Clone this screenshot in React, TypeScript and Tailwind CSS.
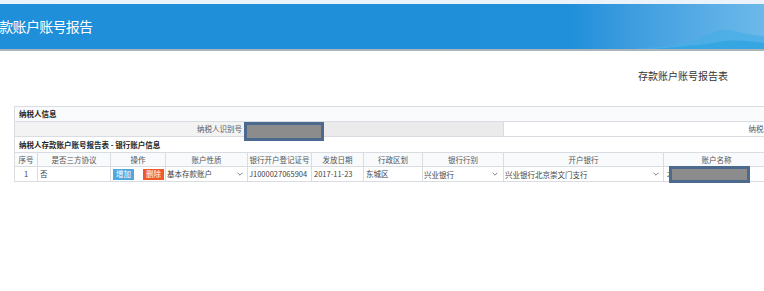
const font = { fontFamily: '"Noto Sans CJK SC", "Noto Sans", sans-serif' };

function Chevron() {
  return (
    <svg viewBox="0 0 10 6" className="w-[6px] h-[4px] shrink-0" fill="none" stroke="#666" strokeWidth="1.4">
      <path d="M1 1l4 4 4-4" />
    </svg>
  );
}

function Redacted({ className }: { className: string }) {
  return <div className={`absolute border-[3px] border-[#4c6a8e] bg-[#8c8c8c] ${className}`} />;
}

const cols = [
  { name: '序号', w: 23 },
  { name: '是否三方协议', w: 73 },
  { name: '操作', w: 55 },
  { name: '账户性质', w: 82 },
  { name: '银行开户登记证号', w: 64 },
  { name: '发放日期', w: 52 },
  { name: '行政区划', w: 59 },
  { name: '银行行别', w: 81 },
  { name: '开户银行', w: 160 },
  { name: '账户名称', w: 106 },
];

export default function App() {
  return (
    <div className="w-[764px] h-[291px] overflow-hidden bg-white relative" style={font}>
      {/* banner */}
      <div className="h-[4px] bg-[#eaf3fa]" />
      <div className="relative h-[45px] bg-gradient-to-r from-[#1f8fd9] via-[#2190da] via-75% to-[#6cb9ea] flex items-center overflow-hidden">
        <span className="-ml-[14px] text-white text-[14px] tracking-[-0.7px]">存款账户账号报告</span>
        <svg className="absolute right-0 bottom-0 w-[130px] h-[22px]" viewBox="0 0 130 22" preserveAspectRatio="none">
          <path d="M0 22 C30 20 45 18 60 14 C72 10 78 4 90 3 C100 2 110 8 130 9 L130 22 Z" fill="#4aaee6" opacity="0.8" />
          <path d="M20 22 C50 19 70 18 85 15 C100 12 115 14 130 16 L130 22 Z" fill="#2ba3e0" opacity="0.7" />
        </svg>
      </div>
      <div className="h-[2px] bg-[#a9b4bd]" />

      <div className="h-[55px] flex items-start justify-end pr-[36px] pt-[18px]">
        <span className="text-[10px] text-[#333] leading-[14px]">存款账户账号报告表</span>
      </div>

      {/* form table */}
      <div className="ml-[14px] w-[790px] border-t border-l border-[#d9dde1] text-[7.5px] text-[#444] relative">
        <div className="h-[15px] border-b border-r border-[#d9dde1] bg-[#fafbfc] flex items-center pl-[4px] font-bold text-[#222]">纳税人信息</div>
        <div className="h-[15px] border-b border-[#d9dde1] flex">
          <div className="w-[229px] bg-[#f3f3f3] flex items-center justify-end pr-[2px] text-[#555]">纳税人识别号</div>
          <div className="w-[260px] bg-[#ebebeb] border-r border-[#d9dde1]" />
          <div className="flex-1 flex items-center justify-end pr-[17px] border-r border-[#d9dde1] text-[#555]">纳税人名称</div>
        </div>
        <div className="h-[16px] border-b border-r border-[#d9dde1] flex items-center pl-[4px] font-bold text-[#222]">纳税人存款账户账号报告表 - 银行账户信息</div>
        <div className="flex h-[14px] border-b border-[#d9dde1] bg-[#f8fafc]">
          {cols.map((c) => (
            <div key={c.name} style={{ width: c.w }} className="shrink-0 border-r border-[#d9dde1] flex items-center justify-center text-[#555]">
              {c.name}
            </div>
          ))}
        </div>
        <div className="flex h-[15px] border-b border-[#d9dde1]">
          <div className="w-[23px] shrink-0 border-r border-[#d9dde1] flex items-center justify-center">1</div>
          <div className="w-[73px] shrink-0 border-r border-[#d9dde1] flex items-center pl-[2px]">否</div>
          <div className="w-[55px] shrink-0 border-r border-[#d9dde1] flex items-center gap-[9px] pl-[2px]">
            <span className="h-[11px] px-[3px] bg-[#4fa8e0] text-white flex items-center">增加</span>
            <span className="h-[11px] px-[3px] bg-[#f0592b] text-white flex items-center">删除</span>
          </div>
          <div className="w-[82px] shrink-0 border-r border-[#d9dde1] flex items-center justify-between pl-[1px] pr-[4px]">
            <span>基本存款账户</span>
            <Chevron />
          </div>
          <div className="w-[64px] shrink-0 border-r border-[#d9dde1] flex items-center pl-[1px]">J1000027065904</div>
          <div className="w-[52px] shrink-0 border-r border-[#d9dde1] flex items-center pl-[2px]">2017-11-23</div>
          <div className="w-[59px] shrink-0 border-r border-[#d9dde1] flex items-center pl-[2px]">东城区</div>
          <div className="w-[81px] shrink-0 border-r border-[#d9dde1] flex items-center justify-between pl-[1px] pr-[5px]">
            <span className="pt-[2px]">兴业银行</span>
            <Chevron />
          </div>
          <div className="w-[160px] shrink-0 border-r border-[#d9dde1] flex items-center justify-between pl-[1px] pr-[4px]">
            <span className="pt-[2px]">兴业银行北京崇文门支行</span>
            <Chevron />
          </div>
          <div className="w-[106px] shrink-0 border-r border-[#d9dde1] flex items-center pl-[3px]">北</div>
        </div>
        <Redacted className="left-[229px] top-[15px] w-[80px] h-[19px]" />
        <Redacted className="left-[654px] top-[59px] w-[81px] h-[17px]" />
      </div>
    </div>
  );
}
